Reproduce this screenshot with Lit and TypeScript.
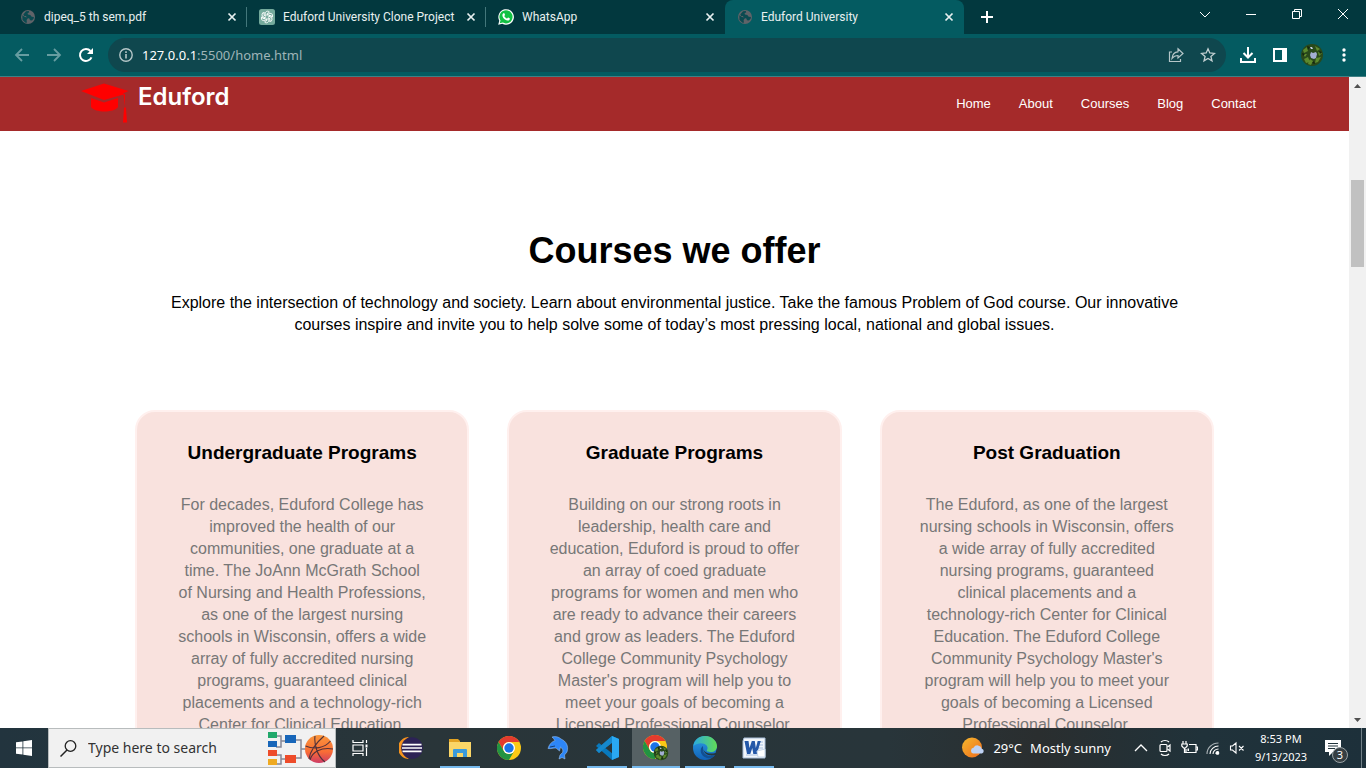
import { LitElement, html, svg, css, nothing } from "lit";
import { customElement, property } from "lit/decorators.js";
import { classMap } from "lit/directives/class-map.js";

const globe = html`<svg width="16" height="16" viewBox="0 0 16 16"><circle cx="8" cy="8" r="7" fill="#5f6368"/><path d="M2.3 6.2 5 8.1l2.2.3.6 1.2-1.2 1.5.3 2.7-1.4-.1-3-2.8ZM6 2.3l2.8-.2.4 1.3-1.6.7.3 1.3 2.4.5 1.4 1.8 2.2.4-.2 1.5-1.7 1.8-2-.2-.6-1.7-2-.6-1.6-2-1.6.2-.9-1.5Z" fill="#0b4a50"/></svg>`;

const chatgpt = html`<svg width="16" height="16" viewBox="0 0 16 16"><rect width="16" height="16" rx="2.5" fill="#74aa9c"/><g fill="none" stroke="#fff" stroke-width=".9">
${[0, 60, 120, 180, 240, 300].map((a) => svg`<path transform="rotate(${a} 8 8)" d="M6.2 6.9V4.7c0-2.5 3-3.4 4.3-1.5L8 4.7v2.2"/>`)}</g></svg>`;

const whatsapp = html`<svg width="16" height="16" viewBox="0 0 16 16"><path d="M.2 15.8 1.3 11.8A7.8 7.8 0 1 1 4.3 14.8Z" fill="#fff"/><path d="M1.7 14.3 2.5 11.5A6.6 6.6 0 1 1 4.8 13.6Z" fill="#12c143"/><path d="M5.6 4.2c.5-.2.8 0 1 .5l.4 1c.1.4-.5.9-.7 1.2.6 1.3 1.5 2.1 2.8 2.7.4-.3.8-1.1 1.2-1l1.6.8c.1 1.4-1 2.3-2.4 2.1C6.600 11 4.300 8.200 4.400 6.200c0-.9.5-1.700 1.200-2Z" fill="#fff"/></svg>`;

const cross = html`<svg width="16" height="16" viewBox="0 0 16 16"><path d="m4.500 4.500 7 7m0-7-7 7" stroke="#e8f0f0" stroke-width="1.700" fill="none"/></svg>`;

const line = (d: string, size = 16, width = 1, color = "#fff") =>
  html`<svg width=${size} height=${size} viewBox="0 0 16 16"><path d=${d} fill="none" stroke=${color} stroke-width=${width}/></svg>`;

const leaves = svg`<circle cx="12" cy="12" r="11" fill="#29491b"/><g fill="#5d8a2e"><path d="m3 7 4-3 1 4-4 2ZM15 3l5 3-3 2ZM4 16l4-2 2 5-4 1ZM16 15l5-1-3 5-3 1ZM10 16l3 2-2 4-3-1ZM3 11l4 0-2 3ZM18 9l4 1-3 3Z"/></g><g fill="#14250f"><path d="m2 10 3 1-2 2ZM7 3l3 1-2 3ZM19 8l3 1-2 2ZM12 20l2-2 1 3Z"/></g><path d="m11 9 2 1 3-1 1 2-1 4-2 1-3-1-1-3Z" fill="#a3afd3"/><path d="m10 4 2 0 1 2-2 0Z" fill="#c5cfe6"/>`;

const chromeArt = svg`<circle cx="12" cy="12" r="12" fill="#fbc916"/><path d="M1.600 6A12 12 0 0 1 22.400 6H12a6 6 0 0 0-5.200 9Z" fill="#e33b2e"/><path d="M1.600 6A12 12 0 0 0 12 24l5.200-9a6 6 0 0 1-10.400 0Z" fill="#229342"/><circle cx="12" cy="12" r="6" fill="#fff"/><circle cx="12" cy="12" r="4.700" fill="#1a73e8"/>`;

const art = {
  eclipse: html`<svg width="24" height="24" viewBox="0 0 24 24"><path d="M10 1A11 11 0 0 0 10 23 13 13 0 0 1 10 1Z" fill="#f7941e"/><circle cx="13" cy="12" r="10.800" fill="#2c2255"/><path d="M3.500 8.700h19M3 12h20M3.500 15.300h19" stroke="#fff" stroke-width="1.700"/></svg>`,
  folder: html`<svg width="24" height="24" viewBox="0 0 24 24"><path d="M1 3h9l2 2v4H1Z" fill="#e3a322"/><path d="M1 6h22v15H1Z" fill="#fbd667"/><path d="M5 14q0-1 1-1h12q1 0 1 1v7h-4v-4H9v4H5Z" fill="#3c9bdc"/></svg>`,
  chrome: html`<svg width="24" height="24" viewBox="0 0 24 24">${chromeArt}</svg>`,
  dolphin: html`<svg width="24" height="24" viewBox="0 0 24 24"><path d="M2 12.500C3 9 5 6 9 4.500 8 3 7 2 6 1c4-1 7 0 9 2 5 2 8 7 6 13l-2.500 3 .5 4-3-1.500-3 1.500 1-4 2.500-2.500c1-2 0-4-2-5.500l-1 4-3.500-3c-3 0-5 1-8 .5Z" fill="#2d86f7" stroke="#a9cdf6" stroke-width=".5"/><path d="m4 11 5-1" stroke="#163e75"/></svg>`,
  code: html`<svg width="26" height="26" viewBox="0 0 26 26"><path d="m18 1 7 3v18l-7 3L2 11l3-3 14 11V7L5 18l-3-3Z" fill="#0879bd"/><path d="M18 1 2 15l3 3L19 7Z" fill="#1688cc"/><path d="m18 1 7 3v18l-7 3Z" fill="#2aa9f2"/></svg>`,
  profile: html`<svg width="26" height="26" viewBox="0 0 26 26"><svg width="24" height="24">${chromeArt}</svg><svg x="10" y="10" width="16" height="16" viewBox="0 0 24 24">${leaves}</svg></svg>`,
  edge: html`<svg width="24" height="24" viewBox="0 0 24 24"><defs><linearGradient id="top"><stop stop-color="#2aa9df"/><stop offset="1" stop-color="#62dc55"/></linearGradient><linearGradient id="low" x2="0" y2="1"><stop stop-color="#2d9fe6"/><stop offset="1" stop-color="#1162b8"/></linearGradient></defs><circle cx="12" cy="12" r="12" fill="url(#low)"/><path d="M.3 10C1 4 6 0 12 0c7 0 12 5 12 10 0 4-3 6-6 6-3 0-5-1-4-2 3-5-6-10-13.700-4Z" fill="url(#top)"/><path d="M10 10c-4 3-3 10 4 12 4 1 7-1 8-3-5 2-10 1-12-4Z" fill="#124f93"/><path d="M10.500 11c-1 4 3 8 12 6l1.500-5v7l-1.500-.2C17 21 9 18 10.500 11Z" fill="#25353c"/></svg>`,
  word: html`<svg width="24" height="24" viewBox="0 0 24 24"><path d="M2 2h21v20H1V5Z" fill="#f2f6fb" stroke="#a9bed8"/><path d="M15 6h6m-6 3h6m-6 3h6m-17 7h12" stroke="#a5bee0"/><path d="m2.500 5 4 0 1 7 2.300-7h3l1 7 2-7h3l-4 13h-3.500l-1-6-2 6H5Z" fill="#2458a8"/><path d="m15 15 8-2v8h-7Z" fill="#fff" stroke="#c5d5e8"/></svg>`,
};

@customElement("browser-tab")
export class BrowserTab extends LitElement {
  @property() label = "";
  @property({ attribute: false }) icon: unknown = nothing;
  @property({ type: Boolean }) active = false;
  @property({ type: Boolean }) divided = false;

  static styles = css`
    :host { display: block; flex: 0 1 239px; min-width: 0; }
    .tab { box-sizing: border-box; height: 34px; display: flex; align-items: center; gap: 8px; padding: 0 7px 0 12px; color: #e8f0f0; }
    .active { background: #045b61; border-radius: 8px 8px 0 0; }
    .divided { background: linear-gradient(#43777b, #43777b) no-repeat right center / 1px 20px; }
    .title { flex: 1; min-width: 0; white-space: nowrap; overflow: hidden; font-family: Roboto, sans-serif; }
    .close { border: 0; padding: 0; background: none; display: flex; }
  `;

  render() {
    return html`<div class=${classMap({ tab: true, active: this.active, divided: this.divided })}>
      ${this.icon}<span class="title">${this.label}</span>
      <button class="close" aria-label="Close tab">${cross}</button>
    </div>`;
  }
}

@customElement("browser-chrome")
export class BrowserChrome extends LitElement {
  static styles = css`
    :host { display: block; font: 12px/16px "Noto Sans", "Open Sans", sans-serif; }
    button { border: 0; padding: 0; background: none; display: flex; align-items: center; justify-content: center; }
    .strip { display: flex; height: 34px; background: #02383e; padding-left: 8px; }
    .tabs { display: flex; flex: 1; min-width: 0; }
    .add { width: 46px; height: 34px; }
    .window { display: flex; }
    .window button { width: 46px; height: 28px; }
    .bar { display: flex; align-items: center; height: 42px; padding: 0 6px; background: #045b61; border-bottom: 1px solid #3f8085; }
    .bar button { width: 32px; height: 32px; }
    .address { flex: 1; display: flex; align-items: center; height: 34px; margin: 0 6px; padding: 0 2px; border-radius: 17px; background: #0f474e; }
    .url { flex: 1; position: relative; display: flex; align-items: center; font-size: 13px; line-height: 20px; color: #9fb5b8; }
    .host { color: #fff; }
    .field { position: absolute; inset: 0; border: 0; padding: 0; background: none; color: transparent; font: inherit; width: 100%; }
  `;

  render() {
    return html`
      <div class="strip">
        <div class="tabs">
          <browser-tab label="dipeq_5 th sem.pdf" .icon=${globe} divided></browser-tab>
          <browser-tab label="Eduford University Clone Project" .icon=${chatgpt} divided></browser-tab>
          <browser-tab label="WhatsApp" .icon=${whatsapp}></browser-tab>
          <browser-tab label="Eduford University" .icon=${globe} active></browser-tab>
          <button class="add" aria-label="New tab">${line("M8 2v12M2 8h12", 16, 2)}</button>
        </div>
        <div class="window">
          <button aria-label="Search tabs">${line("m3 6 5 5 5-5")}</button>
          <button aria-label="Minimize">${line("M3 8.500h10")}</button>
          <button aria-label="Restore">${line("M3.500 5.500h7v7h-7ZM5.500 5V3.500h7v7H11")}</button>
          <button aria-label="Close">${line("m3 3 10 10m0-10L3 13")}</button>
        </div>
      </div>
      <div class="bar">
        <button aria-label="Back">${line("M15 8H2m6-6L2 8l6 6", 16, 1.8, "#679da1")}</button>
        <button aria-label="Forward">${line("M1 8h13M8 2l6 6-6 6", 16, 1.8, "#679da1")}</button>
        <button aria-label="Reload"><svg width="16" height="16" viewBox="0 0 16 16"><path d="M13.500 10.300A6 6 0 1 1 12.500 4" fill="none" stroke="#fff" stroke-width="2"/><path d="M15 1v6H9Z" fill="#fff"/></svg></button>
        <div class="address">
          <button aria-label="Site information"><svg width="16" height="16" viewBox="0 0 16 16"><circle cx="8" cy="8" r="6.200" fill="none" stroke="#b5c6c8" stroke-width="1.400"/><path d="M8 7v4.500M8 4.300v1.600" stroke="#b5c6c8" stroke-width="1.600"/></svg></button>
          <div class="url"><span class="host">127.0.0.1</span><span>:5500/home.html</span><input class="field" aria-label="Address"></div>
          <button aria-label="Share">${line("M4 5H1.500v9.500h11V12M10 1.800 15 6.500 10 11V8.500C7 8.500 5.500 9.500 4 11.500 4.300 7.500 6.500 5 10 4.800Z", 16, 1.2, "#b5c6c8")}</button>
          <button aria-label="Bookmark">${line("m8 1.800 1.800 4.200 4.700.4-3.600 3 1.100 4.500L8 11.500l-4 2.400 1.100-4.500-3.600-3 4.700-.4Z", 16, 1.3, "#c3d0d2")}</button>
        </div>
        <button aria-label="Downloads">${line("M8 0v10M3.500 6 8 10.500 12.500 6M1 11v4h14v-4", 16, 2)}</button>
        <button aria-label="Side panel"><svg width="16" height="16" viewBox="0 0 16 16"><path d="M2 2h12v12H2Z" fill="none" stroke="#fff" stroke-width="2"/><path d="M10 2h4v12h-4Z" fill="#fff"/></svg></button>
        <button aria-label="Profile"><svg width="24" height="24" viewBox="0 0 24 24">${leaves}</svg></button>
        <button aria-label="Menu"><svg width="16" height="16" viewBox="0 0 16 16" fill="#fff"><circle cx="8" cy="3" r="1.700"/><circle cx="8" cy="8" r="1.700"/><circle cx="8" cy="13" r="1.700"/></svg></button>
      </div>`;
  }
}

interface Course { title: string; lines: string[]; }

const courses: Course[] = [
  {
    title: "Undergraduate Programs",
    lines: ["For decades, Eduford College has", "improved the health of our", "communities, one graduate at a", "time. The JoAnn McGrath School", "of Nursing and Health Professions,", "as one of the largest nursing", "schools in Wisconsin, offers a wide", "array of fully accredited nursing", "programs, guaranteed clinical", "placements and a technology-rich", "Center for Clinical Education."],
  },
  {
    title: "Graduate Programs",
    lines: ["Building on our strong roots in", "leadership, health care and", "education, Eduford is proud to offer", "an array of coed graduate", "programs for women and men who", "are ready to advance their careers", "and grow as leaders. The Eduford", "College Community Psychology", "Master's program will help you to", "meet your goals of becoming a", "Licensed Professional Counselor."],
  },
  {
    title: "Post Graduation",
    lines: ["The Eduford, as one of the largest", "nursing schools in Wisconsin, offers", "a wide array of fully accredited", "nursing programs, guaranteed", "clinical placements and a", "technology-rich Center for Clinical", "Education. The Eduford College", "Community Psychology Master's", "program will help you to meet your", "goals of becoming a Licensed", "Professional Counselor."],
  },
];

@customElement("eduford-page")
export class EdufordPage extends LitElement {
  static styles = css`
    :host { display: flex; flex: 1; min-height: 0; font: 16px/22px "Liberation Sans", Arial, sans-serif; background: #fff; color: #000; }
    .page { flex: 1; min-width: 0; overflow: hidden; }
    .nav { display: flex; justify-content: space-between; height: 54px; padding: 0 6%; background: #a52a2a; }
    .brand { display: flex; gap: 9px; padding-top: 5px; color: #fff; text-decoration: none; font: 600 24px/30px Inter, sans-serif; }
    .links { display: flex; align-items: center; gap: 28px; margin: 0; padding: 0 12px 2px 0; list-style: none; }
    .link { color: #fff; font-size: 13px; text-decoration: none; }
    .courses { width: 80%; margin: 0 auto; padding-top: 98px; text-align: center; }
    .heading { margin: 0; font-size: 36px; line-height: 44px; }
    .intro { margin: 0; padding: 19px 30px 0; }
    .row { display: flex; justify-content: space-between; margin-top: 74px; }
    .card { flex-basis: 31%; box-sizing: border-box; border: 2px solid #fff0ee; border-radius: 20px; background: #f9e2de; padding: 20px 12px; }
    .title { margin: 10px 0 30px; font-size: 19px; line-height: 22px; }
    .text { margin: 0; color: #777; white-space: nowrap; }
    .scroll { display: flex; flex-direction: column; justify-content: space-between; align-items: center; width: 17px; background: #f1f1f1; }
    .scroll button { border: 0; padding: 0; width: 17px; height: 17px; background: none; display: flex; align-items: center; justify-content: center; }
    .track { flex: 1; width: 13px; display: flex; flex-direction: column; }
    .before { flex: 86; }
    .thumb { flex: 87; background: #c1c1c1; }
    .after { flex: 444; }
  `;

  render() {
    return html`
      <div class="page">
        <nav class="nav">
          <a class="brand" href="#home">
            <svg width="48" height="42" viewBox="0 0 48 42" fill="red"><path d="M0 9 23 1.500 47.500 9 42 11.500l2 1v12l1 2 1 14h-4l1-14 1-2-1.500-12L23 18ZM10 16l13 4.500L37 16v9c-4 6-23 6-27 0Z"/></svg>
            <span>Eduford</span>
          </a>
          <ul class="links">
            ${["Home", "About", "Courses", "Blog", "Contact"].map((name) => html`<li><a class="link" href="#${name.toLowerCase()}">${name}</a></li>`)}
          </ul>
        </nav>
        <section class="courses">
          <h1 class="heading">Courses we offer</h1>
          <p class="intro">Explore the intersection of technology and society. Learn about environmental justice. Take the famous Problem of God course. Our innovative courses inspire and invite you to help solve some of today’s most pressing local, national and global issues.</p>
          <div class="row">
            ${courses.map((c) => html`<article class="card"><h3 class="title">${c.title}</h3>
              <p class="text">${c.lines.map((l, i) => html`${i ? html`<br>` : nothing}${l}`)}</p></article>`)}
          </div>
        </section>
      </div>
      <div class="scroll">
        <button aria-label="Scroll up"><svg width="7" height="4"><path d="M0 4 3.500 0 7 4Z" fill="#505050"/></svg></button>
        <div class="track"><div class="before"></div><div class="thumb"></div><div class="after"></div></div>
        <button aria-label="Scroll down"><svg width="7" height="4"><path d="M0 0 3.500 4 7 0Z" fill="#505050"/></svg></button>
      </div>`;
  }
}

@customElement("task-bar")
export class TaskBar extends LitElement {
  static styles = css`
    :host { display: flex; height: 40px; background: linear-gradient(90deg, #22343e, #293539 30%, #28353a 65%, #2a2e2f 76%, #20323a 88%, #1d303a); color: #fff; font: 14px/20px "Noto Sans", "Open Sans", sans-serif; }
    button { border: 0; padding: 0; background: none; color: inherit; font: inherit; display: flex; align-items: center; justify-content: center; }
    .start, .view { width: 48px; }
    .search { box-sizing: border-box; width: 288px; display: flex; align-items: center; gap: 11px; padding: 0 2px 0 11px; background: #f1f1f1; border: 1px solid #b8bcbd; }
    .query { flex: 1; min-width: 0; border: 0; padding: 0; background: none; font: inherit; color: #333; }
    .query::placeholder { color: #333; opacity: 1; }
    .apps { flex: 1; display: flex; gap: 1px; margin-left: 3px; }
    .app { box-sizing: border-box; width: 48px; }
    .open { background: linear-gradient(#76b9ed, #76b9ed) no-repeat center bottom / 40px 2px; }
    .current { background: linear-gradient(#76b9ed, #76b9ed) no-repeat center bottom / 48px 2px, #566164; }
    .weather { gap: 8px; padding-right: 18px; font-size: 13px; }
    .tray { width: 24px; }
    .clock { display: flex; flex-direction: column; align-items: center; justify-content: center; width: 64px; font-size: 11px; line-height: 18px; }
    .notes { width: 40px; margin: 0 8px 0 0; position: relative; }
    .edge { width: 5px; border-left: 1px solid #718087; box-sizing: border-box; }
    .badge { position: absolute; left: 19px; top: 19px; width: 16px; height: 16px; box-sizing: border-box; border: 1px solid #9aa3a6; border-radius: 50%; background: #363f43; font-size: 11px; line-height: 14px; }
  `;

  render() {
    return html`
      <button class="start" aria-label="Start"><svg width="16" height="16" viewBox="0 0 16 16" fill="#fff"><path d="M0 2.300 6.500 1.400v6.100H0ZM7.300 1.300 16 0v7.500H7.300ZM0 8.300h6.500v6.300L0 13.700ZM7.300 8.300H16V16l-8.700-1.300Z"/></svg></button>
      <div class="search">
        <svg width="17" height="17" viewBox="0 0 17 17"><circle cx="10.500" cy="6" r="5.300" fill="none" stroke="#222" stroke-width="1.300"/><path d="M7 10 .5 16.500" stroke="#222" stroke-width="1.500"/></svg>
        <input class="query" type="text" aria-label="Type here to search" placeholder="Type here to search">
        <svg width="66" height="36" viewBox="0 0 66 36"><path d="M9 6h5v11H9m5-6h7m-12 14h5v9H9m5-5h7m8-19h5v18h-5m5-9h6" fill="none" stroke="#858795" stroke-width="1.500"/><path d="M1 2h9v6H1Z" fill="#20a86b"/><path d="M1 11h9v6H1ZM18 5h11v8H18Z" fill="#1766b9"/><path d="M1 20h9v6H1ZM18 25h11v8H18Z" fill="#ee4c2a"/><path d="M1 29h9v6H1Z" fill="#efaa22"/><defs><linearGradient id="ball" x2="0" y2="1"><stop stop-color="#fa963c"/><stop offset=".6" stop-color="#f96c35"/><stop offset="1" stop-color="#cd3c66"/></linearGradient></defs><circle cx="52" cy="19" r="14" fill="url(#ball)"/><path d="M38.500 16c9 4 19 2 25-5M43 30c2-8 11-13 23-11M48 6c-1 8 2 20 10 26M57 6c-8 7-14 15-15 23" fill="none" stroke="#51323a" stroke-width="1.100"/></svg>
      </div>
      <button class="view" aria-label="Task view"><svg width="17" height="16" viewBox="0 0 17 16" fill="none" stroke="#fff" stroke-width="1.200"><path d="M1 0v2.500h10V0M1 5h10v6H1ZM1 16v-2.500h10V16M14.500 0v3m0 5v8"/><path d="M13.500 4.500h2v3h-2Z" fill="#fff" stroke="none"/></svg></button>
      <div class="apps">
        <button class="app" aria-label="Eclipse">${art.eclipse}</button>
        <button class="app open" aria-label="File Explorer">${art.folder}</button>
        <button class="app" aria-label="Chrome">${art.chrome}</button>
        <button class="app" aria-label="MySQL">${art.dolphin}</button>
        <button class="app open" aria-label="Visual Studio Code">${art.code}</button>
        <button class="app current" aria-label="Chrome profile">${art.profile}</button>
        <button class="app open" aria-label="Edge">${art.edge}</button>
        <button class="app open" aria-label="Word">${art.word}</button>
      </div>
      <button class="weather">
        <svg width="23" height="22" viewBox="0 0 23 22"><defs><linearGradient id="sun" x2="1" y2="1"><stop stop-color="#f5b92e"/><stop offset="1" stop-color="#ef6b1c"/></linearGradient></defs><circle cx="10" cy="10.500" r="10" fill="url(#sun)"/><path d="M11 16.500a3 3 0 0 1 .5-5.800 4.500 4.500 0 0 1 8.300 1 2.500 2.500 0 0 1 .2 4.800Z" fill="#bed2f4"/></svg>
        <span>29°C</span><span>Mostly sunny</span>
      </button>
      <button class="tray" aria-label="Hidden icons">${line("m2 11 6-6 6 6", 16, 1.300)}</button>
      <button class="tray" aria-label="Meet now"><svg width="16" height="18" viewBox="0 0 16 18" fill="none" stroke="#fff" stroke-width="1.200"><rect x="3" y="5.500" width="7" height="7" rx="1"/><path d="m10.500 8 2.500-2v6l-2.500-2M4 3c2-2 6-2 8 0M4 15c2 2 6 2 8 0"/></svg></button>
      <button class="tray" aria-label="Battery"><svg width="17" height="16" viewBox="0 0 17 16" fill="none" stroke="#fff" stroke-width="1.200"><path d="M8 4.500h7v8H5V9M15 7h1.500v3H15M2 1v3m3-3v3M.8 4h5.400v2L4.500 8h-2L.8 6ZM3.500 8v4.500H5"/><path d="M6.500 8.500H8v2.500H6.500Z" fill="#fff" stroke="none"/></svg></button>
      <button class="tray" aria-label="Network"><svg width="16" height="16" viewBox="0 0 16 16" fill="none" stroke="#fff" stroke-width="1.100"><path d="M2 14C2 8 7 3 13.500 3" stroke="#a7b0b4"/><path d="M5 14c0-4.500 4-8 8.500-8M8 14c0-3 2.500-5 5.500-5M11 14c0-1.500 1-2.500 2.500-2.500"/><circle cx="12.500" cy="13" r="1.300" fill="#fff"/></svg></button>
      <button class="tray" aria-label="Volume">${line("M1.500 6h2L7 3v10l-3.500-3h-2ZM10 6l4.500 4.500m0-4.500L10 10.500", 16, 1.1)}</button>
      <div class="clock"><span>8:53 PM</span><span>9/13/2023</span></div>
      <button class="notes" aria-label="Notifications"><svg width="16" height="16" viewBox="0 0 16 16"><path d="M0 0h16v12H8l-4 4v-4H0Z" fill="#fff"/><path d="M3 3.500h10M3 6h10M3 8.500h7" stroke="#22343c"/></svg><span class="badge">3</span></button>
      <div class="edge"></div>`;
  }
}

@customElement("app-root")
export class AppRoot extends LitElement {
  static styles = css`
    :host { display: flex; flex-direction: column; height: 100vh; overflow: hidden; }
  `;

  render() {
    return html`<browser-chrome></browser-chrome><eduford-page></eduford-page><task-bar></task-bar>`;
  }
}
